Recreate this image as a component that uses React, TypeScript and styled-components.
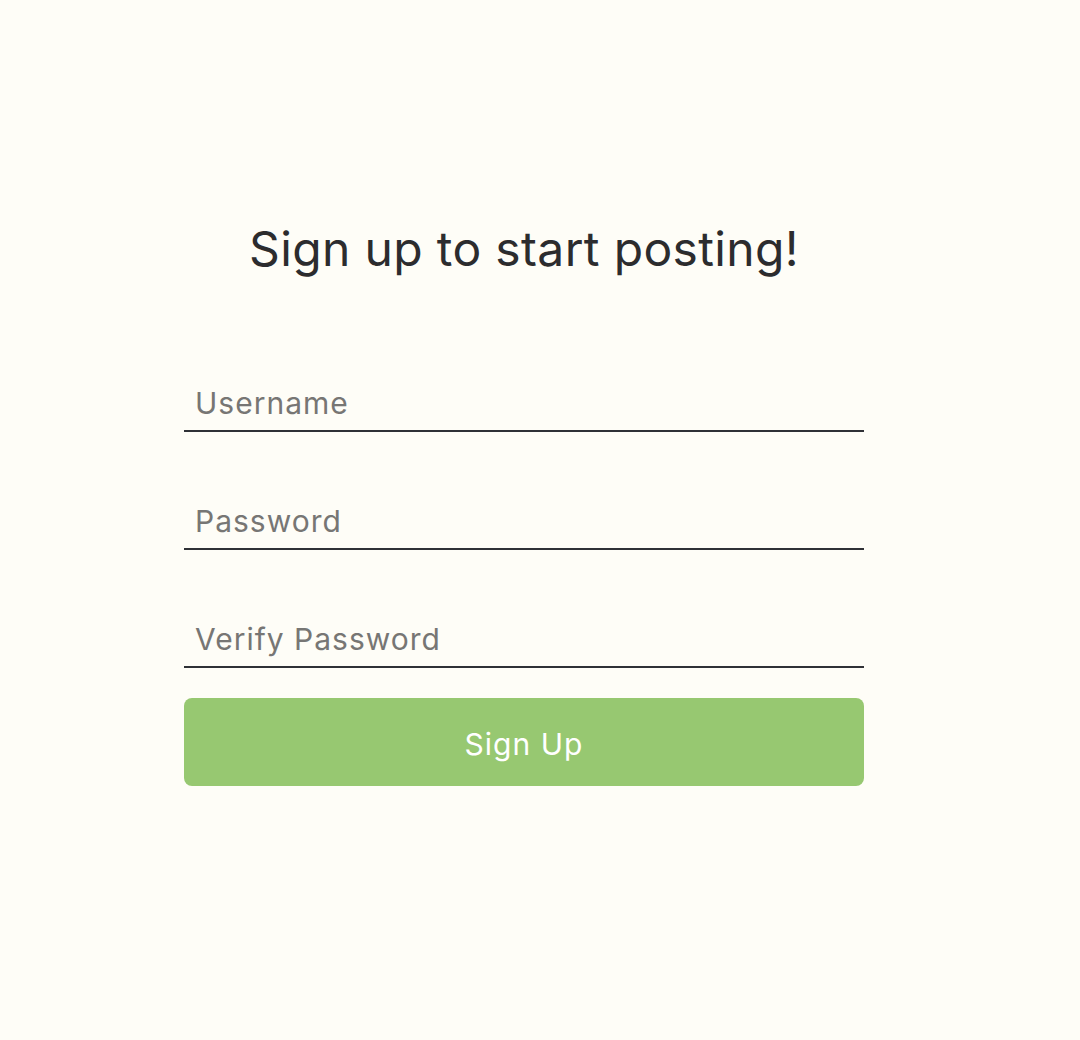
import React from "react";
import styled, { createGlobalStyle } from "styled-components";

const GlobalStyle = createGlobalStyle`
  html, body {
    margin: 0;
    padding: 0;
    background: #fefdf7;
  }
  body {
    font-family: Inter, "Noto Sans", sans-serif;
  }
`;

const Page = styled.main`
  min-height: 1040px;
  display: flex;
  justify-content: center;
  padding-left: 184px;
  padding-right: 216px;
  box-sizing: border-box;
`;

const Form = styled.form`
  width: 680px;
  display: flex;
  flex-direction: column;
  padding-top: 216px;
`;

const Title = styled.h1`
  margin: 0 0 88px;
  text-align: center;
  font-family: Inter, sans-serif;
  font-weight: 400;
  font-size: 48px;
  letter-spacing: 0.35px;
  line-height: 66px;
  color: #2c2c2e;
`;

const Field = styled.input<{ $gap: number }>`
  display: block;
  width: 100%;
  box-sizing: border-box;
  height: 62px;
  margin-top: ${(p) => p.$gap}px;
  padding: 6px 11px 0;
  border: none;
  border-bottom: 2px solid #2f3136;
  background: transparent;
  font-family: Inter, sans-serif;
  font-size: 30px;
  letter-spacing: 1px;
  color: #2c2c2e;
  outline: none;
  &::placeholder {
    color: #777674;
  }
`;

const Button = styled.button`
  margin-top: 30px;
  height: 88px;
  width: 100%;
  padding: 4px 0 0;
  border: none;
  border-radius: 8px;
  background: #97c871;
  color: #ffffff;
  font-family: Inter, sans-serif;
  font-size: 30px;
  letter-spacing: 1px;
  cursor: pointer;
`;

export default function App() {
  return (
    <>
      <GlobalStyle />
      <Page>
        <Form onSubmit={(e) => e.preventDefault()}>
          <Title>Sign up to start posting!</Title>
          <Field $gap={0} placeholder="Username" />
          <Field $gap={56} type="password" placeholder="Password" />
          <Field $gap={56} type="password" placeholder="Verify Password" />
          <Button type="submit">Sign Up</Button>
        </Form>
      </Page>
    </>
  );
}
